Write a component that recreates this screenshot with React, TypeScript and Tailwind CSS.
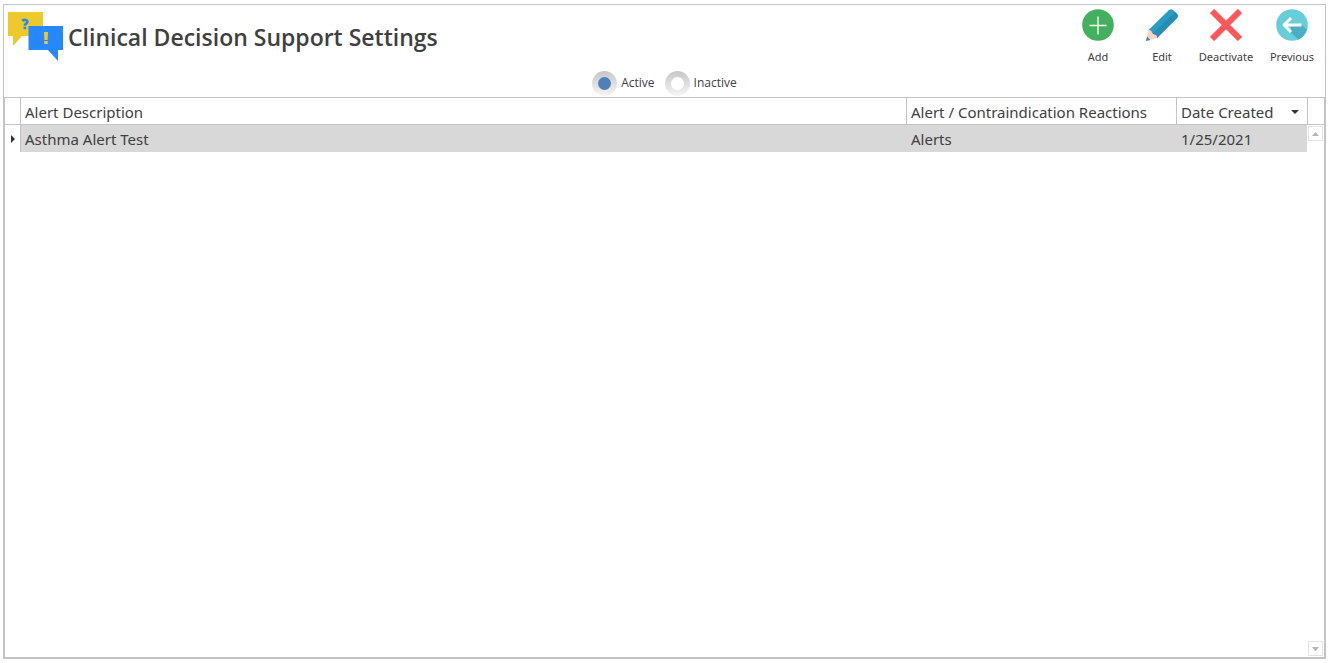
import { useState } from "react";
import type { ReactNode } from "react";

type Alert = {
  id: number;
  description: string;
  reaction: string;
  createdAt: string;
};

const alerts: Alert[] = [
  { id: 1, description: "Asthma Alert Test", reaction: "Alerts", createdAt: "1/25/2021" },
];

function LogoIcon() {
  return (
    <svg width="56" height="50" viewBox="0 0 56 50" aria-hidden="true">
      <path d="M0 0H35V24H14L5 34V24H0Z" fill="#eec92c" />
      <path
        d="M14.2 8.8C15.8 7.4 19.4 7.6 19.4 9.8C19.4 11.7 16.8 11.6 16.8 13.8"
        fill="none"
        stroke="#2688ff"
        strokeWidth="2.6"
      />
      <rect x="15.5" y="14.8" width="2.7" height="2.4" fill="#2688ff" />
      <path d="M20.5 14H55V38H50V49L40 38H20.5Z" fill="#2688ff" />
      <path d="M36 20H40L39.6 28H36.4Z" fill="#eec92c" />
      <rect x="36.3" y="29" width="3.4" height="3" fill="#eec92c" />
    </svg>
  );
}

function AddIcon() {
  return (
    <svg width="32" height="32" viewBox="0 0 32 32" aria-hidden="true">
      <circle cx="16" cy="16" r="15.8" fill="#42b05c" />
      <path d="M16 7.5V25.5M7.5 16.5H24.5" stroke="#fff" strokeWidth="1.3" />
    </svg>
  );
}

function EditIcon() {
  return (
    <svg width="32" height="32" viewBox="0 0 32 32" aria-hidden="true">
      <path d="M2.5 21L23 1Q25 -.6 27 1L31 5Q33 7 31 9L11 29Z" fill="#2b9cc4" />
      <path d="M6.5 25L29 3L31 5Q33 7 31 9L11 29Z" fill="#268db6" />
      <path d="M2.5 21Q5.4 20.6 6 23.4Q6.2 25 8.4 25.4Q11.4 26 11 29L1.6 31.8L.2 30.4Z" fill="#fbd3c4" />
      <path d="M1 27.6L4.2 31L0 32Z" fill="#2b86ac" />
    </svg>
  );
}

function DeactivateIcon() {
  return (
    <svg width="32" height="32" viewBox="0 0 32 32" aria-hidden="true">
      <path d="M2 2L30 30M30 2L2 30" stroke="#ff5659" strokeWidth="6" />
    </svg>
  );
}

function PreviousIcon() {
  return (
    <svg width="32" height="32" viewBox="0 0 32 32" aria-hidden="true">
      <circle cx="16" cy="16" r="15.8" fill="#65ced9" />
      <path d="M8 17L22.2 30.5Q28.5 27.8 31 20.8L25.6 15.5H15V21.5Z" fill="#4bafc4" />
      <path
        d="M25.5 16H8.5M15 9L8 16L15 23"
        fill="none"
        stroke="#fff"
        strokeWidth="3"
        strokeLinejoin="round"
      />
    </svg>
  );
}

function ToolButton({ label, className, children }: { label: string; className: string; children: ReactNode }) {
  return (
    <button type="button" className={`flex flex-col items-center gap-2 pt-1 ${className}`}>
      {children}
      <span className="text-[11px] leading-4">{label}</span>
    </button>
  );
}

function StatusRadio({ label, checked, onChange }: { label: string; checked: boolean; onChange: () => void }) {
  return (
    <label className="flex items-center gap-1 font-['Open_Sans',sans-serif] text-xs">
      <span className="grid size-[25px] place-items-center rounded-full bg-linear-to-b from-[#c6c6c6] to-[#f6f6f6]">
        <input
          type="radio"
          name="status"
          checked={checked}
          onChange={onChange}
          className="size-[13px] appearance-none rounded-full bg-white checked:bg-[#5080b8]"
        />
      </span>
      {label}
    </label>
  );
}

function ScrollButton({ label, up = false }: { label: string; up?: boolean }) {
  return (
    <button
      type="button"
      aria-label={label}
      className="grid size-[15px] place-items-center border border-[#e3e3e3]"
    >
      <svg width="7" height="4" viewBox="0 0 7 4" aria-hidden="true">
        <path d={up ? "M0 4L3.5 0L7 4Z" : "M0 0H7L3.5 4Z"} fill="#b4b4b4" />
      </svg>
    </button>
  );
}

export default function App() {
  const [status, setStatus] = useState("active");

  return (
    <div className="h-screen bg-white px-[3px] py-1 font-['Noto_Sans',sans-serif] text-[#404040]">
      <main className="flex h-full flex-col border border-[#c3c3c3]">
        <header className="flex h-16 shrink-0 justify-between">
          <div className="flex items-center gap-1 pl-1">
            <LogoIcon />
            <h1 className="font-['Open_Sans',sans-serif] text-[23px] leading-8 font-semibold">
              Clinical Decision Support Settings
            </h1>
          </div>
          <div className="flex">
            <ToolButton label="Add" className="w-[66px]">
              <AddIcon />
            </ToolButton>
            <ToolButton label="Edit" className="w-[62px]">
              <EditIcon />
            </ToolButton>
            <ToolButton label="Deactivate" className="w-[66px]">
              <DeactivateIcon />
            </ToolButton>
            <ToolButton label="Previous" className="w-[66px]">
              <PreviousIcon />
            </ToolButton>
          </div>
        </header>

        <div className="flex h-7 shrink-0 justify-center gap-2.5">
          <StatusRadio label="Active" checked={status === "active"} onChange={() => setStatus("active")} />
          <StatusRadio label="Inactive" checked={status === "inactive"} onChange={() => setStatus("inactive")} />
        </div>

        <section className="flex min-h-0 grow border border-[#c3c3c3]">
          <div className="grow">
            <table className="w-full table-fixed border-separate border-spacing-0 text-left text-[15px] leading-5">
              <colgroup>
                <col className="w-4" />
                <col />
                <col className="w-[270px]" />
                <col className="w-[130px]" />
              </colgroup>
              <thead>
                <tr className="h-[27px]">
                  <td className="border-r border-b border-[#c3c3c3]" />
                  <th className="border-r border-b border-[#c3c3c3] px-1 pt-0.5 font-normal">Alert Description</th>
                  <th className="border-r border-b border-[#c3c3c3] px-1 pt-0.5 font-normal">
                    Alert / Contraindication Reactions
                  </th>
                  <th className="border-b border-[#c3c3c3] px-1 pt-0.5 font-normal" aria-sort="descending">
                    <button type="button" className="flex w-full items-center justify-between pr-1">
                      Date Created
                      <svg width="8" height="4" viewBox="0 0 8 4" aria-hidden="true">
                        <path d="M0 0H8L4 4Z" fill="#333" />
                      </svg>
                    </button>
                  </th>
                </tr>
              </thead>
              <tbody>
                {status === "active"
                  ? alerts.map((alert) => (
                      <tr key={alert.id} className="h-[27px]">
                        <td className="border-r border-[#c3c3c3] pl-1.5">
                          <svg width="4" height="8" viewBox="0 0 4 8" aria-hidden="true">
                            <path d="M0 0L4 4L0 8Z" fill="#333" />
                          </svg>
                        </td>
                        <td className="bg-[#d8d8d8] px-1">{alert.description}</td>
                        <td className="bg-[#d8d8d8] px-1">{alert.reaction}</td>
                        <td className="bg-[#d8d8d8] px-1">{alert.createdAt}</td>
                      </tr>
                    ))
                  : null}
              </tbody>
            </table>
          </div>
          <div className="flex w-[17px] shrink-0 flex-col">
            <div className="h-[27px] shrink-0 border-b border-l border-[#c3c3c3]" />
            <div className="flex grow flex-col items-center justify-between py-px">
              <ScrollButton label="Scroll up" up />
              <ScrollButton label="Scroll down" />
            </div>
          </div>
        </section>
      </main>
    </div>
  );
}
